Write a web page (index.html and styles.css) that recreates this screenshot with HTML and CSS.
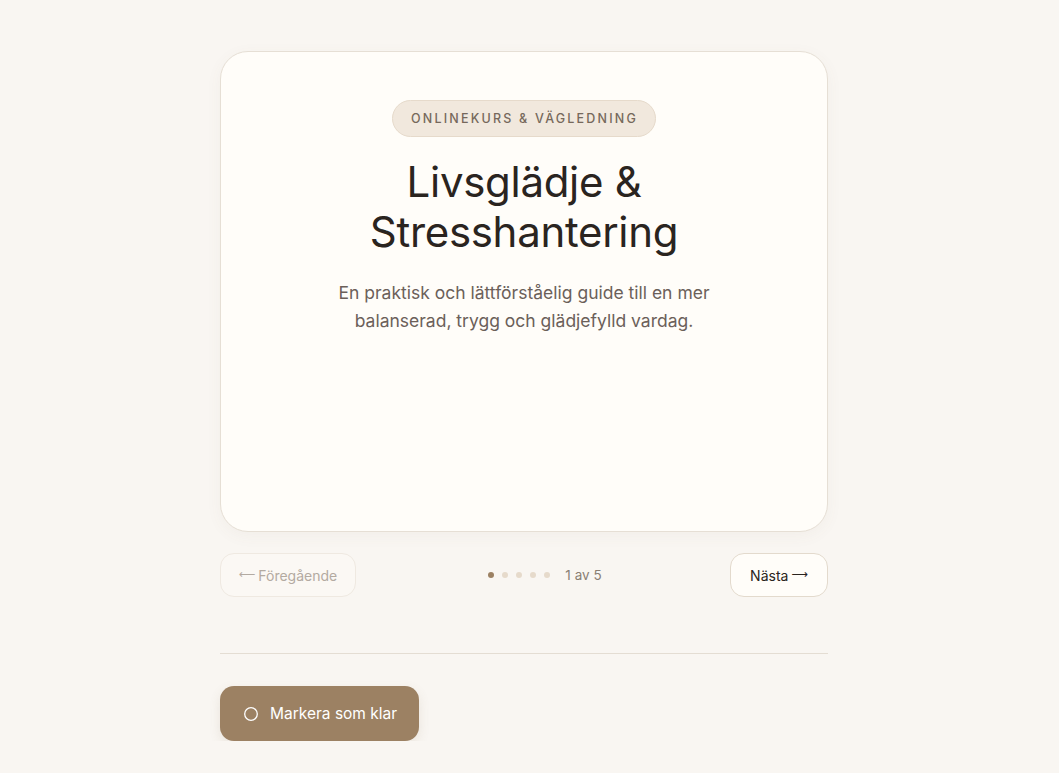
FILE: index.html
```html
<!DOCTYPE html>
<html lang="sv">
<head>
<meta charset="utf-8">
<title>Livsglädje &amp; Stresshantering</title>
<link rel="stylesheet" href="styles.css">
</head>
<body>
<main class="page">
  <section class="card">
    <span class="badge">Onlinekurs &amp; vägledning</span>
    <h1 class="title">Livsglädje &amp;<br>Stresshantering</h1>
    <p class="lead">En praktisk och lättförståelig guide till en mer balanserad, trygg och glädjefylld vardag.</p>
  </section>
  <nav class="pager">
    <button class="btn btn-prev" disabled><span class="arrow">&#x27F5;</span> Föregående</button>
    <div class="progress">
      <span class="dots">
        <span class="dot active"></span>
        <span class="dot"></span>
        <span class="dot"></span>
        <span class="dot"></span>
        <span class="dot"></span>
      </span>
      <span class="count">1 av 5</span>
    </div>
    <button class="btn btn-next">Nästa <span class="arrow">&#x27F6;</span></button>
  </nav>
  <hr class="divider">
  <button class="done">
    <svg class="ring" width="16" height="16" viewBox="0 0 16 16"><circle cx="8" cy="8" r="6.3" fill="none" stroke="#fff" stroke-width="1.3"/></svg>
    <span>Markera som klar</span>
  </button>
</main>
</body>
</html>
```
FILE: styles.css
```css
* { box-sizing: border-box; }
html, body { margin: 0; padding: 0; }
body {
  background: #f9f6f2;
  font-family: "Inter", "DejaVu Sans", sans-serif;
  color: #2a2420;
}
.page {
  width: 608px;
  margin-left: 220px;
  padding-top: 51px;
}
.card {
  height: 481px;
  background: #fffdf9;
  border: 1px solid #e6dfd5;
  border-radius: 28px;
  box-shadow: 0 4px 16px rgba(120, 100, 80, 0.05);
  padding: 48px 40px 0;
  display: flex;
  flex-direction: column;
  align-items: center;
  text-align: center;
}
.badge {
  display: inline-block;
  height: 37px;
  line-height: 35px;
  padding: 0 17px 0 18px;
  border-radius: 19px;
  background: #f1e8dd;
  border: 1px solid #e6dacb;
  font-size: 12.5px;
  letter-spacing: 2.2px;
  text-transform: uppercase;
  color: #76685b;
  font-weight: 500;
}
.title {
  margin: 20px 0 0;
  font-size: 42px;
  line-height: 50px;
  font-weight: 400;
  letter-spacing: -0.3px;
  color: #2a2420;
}
.lead {
  margin: 22px 0 0;
  width: 420px;
  font-size: 17.5px;
  line-height: 28px;
  color: #6b6059;
}
.pager {
  margin-top: 21px;
  display: flex;
  align-items: center;
  justify-content: space-between;
}
.btn {
  height: 44px;
  padding: 0;
  border-radius: 14px;
  font-family: inherit;
  font-size: 14px;
  white-space: nowrap;
  display: flex;
  align-items: center;
  justify-content: center;
  gap: 3px;
  cursor: pointer;
}
.arrow {
  font-family: "DejaVu Sans", sans-serif;
  font-size: 11.5px;
  line-height: 1;
}
.btn-prev {
  width: 136px;
  background: #fbf8f4;
  border: 1px solid #efe9e1;
  color: #b3aaa1;
}
.btn-next {
  width: 98px;
  background: #fffdf9;
  border: 1px solid #e3dacd;
  color: #2a2420;
}
.progress {
  display: flex;
  align-items: center;
  gap: 15px;
  margin-left: 4px;
}
.dots { display: flex; gap: 8px; }
.dot {
  width: 6px;
  height: 6px;
  border-radius: 50%;
  background: #e6dacb;
}
.dot.active { background: #9c8163; }
.count {
  font-size: 13.5px;
  color: #8a7e74;
}
.divider {
  margin: 56px 0 0;
  border: 0;
  border-top: 1px solid #e4ddd3;
}
.done {
  margin-top: 32px;
  height: 55px;
  width: 199px;
  border: 0;
  border-radius: 14px;
  background: #9c8163;
  color: #fff;
  font-family: inherit;
  font-size: 15.5px;
  display: flex;
  align-items: center;
  gap: 11px;
  padding: 0 0 0 23px;
  box-shadow: 0 4px 12px rgba(120, 95, 65, 0.12);
  cursor: pointer;
}
.ring { flex: none; }
```
